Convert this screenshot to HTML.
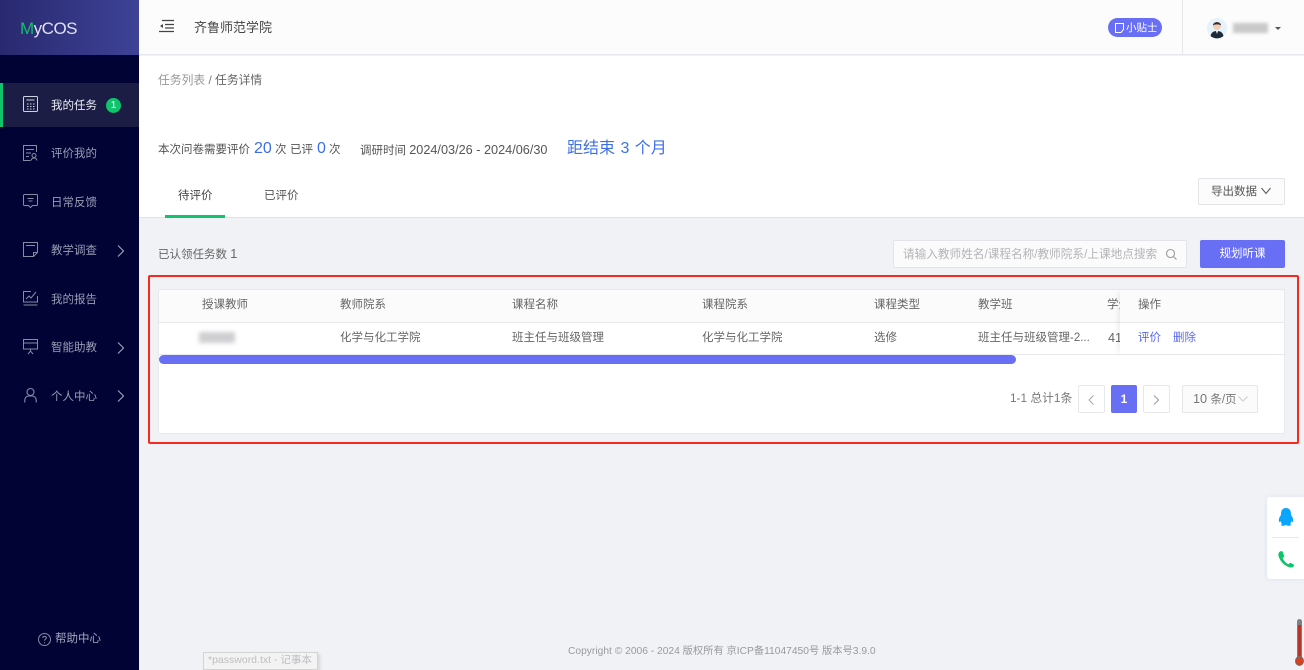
<!DOCTYPE html>
<html lang="zh-CN"><head><meta charset="utf-8"><title>MyCOS</title>
<style>
*{box-sizing:border-box}
html,body{margin:0;padding:0;width:1304px;height:670px;overflow:hidden;background:#f0f2f6;font-family:"Liberation Sans","Noto Sans CJK SC",sans-serif;color:#555;}
.a{position:absolute;white-space:nowrap}
.t12{font-size:11.5px;line-height:16px}
.nav{position:absolute;left:51px;font-size:11.5px;line-height:16px;color:#9a9db5;white-space:nowrap}
.n{font-size:12.7px}
svg{position:absolute;overflow:visible}
</style></head><body>
<div class="a" style="left:0;top:0;width:139px;height:670px;background:#000333"></div>
<div class="a" style="left:0;top:0;width:139px;height:55px;background:linear-gradient(90deg,#28296f,#3e4296)"></div>
<div class="a" style="left:20px;top:17px;font-size:17px;line-height:24px;letter-spacing:-.5px;color:#dfe1f2"><span style="color:#12c06a">M</span>yCOS</div>
<div class="a" style="left:0;top:83px;width:139px;height:44px;background:#1b1d45"></div>
<div class="a" style="left:0;top:83px;width:3px;height:44px;background:#0fc46b"></div>

<svg style="left:23px;top:96px" width="15" height="16" fill="none" stroke="#cfd1df" stroke-width="1"><rect x=".5" y=".5" width="14" height="15" rx="1"/><path d="M3.500 4h8M4 8h1.500M7 8h1.500M10 8h1.500M4 10.500h1.500M7 10.500h1.500M10 10.500h1.500M4 13h1.500M7 13h1.500M10 13h1.500"/></svg>
<div class="nav" style="top:98px;color:#eceef5">我的任务</div>
<div class="a" style="left:106px;top:98px;width:15px;height:15px;border-radius:50%;background:#0fc46b;color:#fff;font-size:10px;line-height:15px;text-align:center">1</div>

<svg style="left:23px;top:145px" width="15" height="16" fill="none" stroke="#888ba3"><path d="M13.500 7V.5H.5v15h7M3 4.500h8M3 8h5M3 11.500h3"/><circle cx="11" cy="10.500" r="2"/><path d="M8 15.500c.5-2 1.500-2.500 3-2.500s2.500.5 3 2.500"/></svg>
<div class="nav" style="top:146px">评价我的</div>

<svg style="left:23px;top:194px" width="15" height="15" fill="none" stroke="#888ba3"><path d="M1.500.5h12a1 1 0 0 1 1 1v9a1 1 0 0 1-1 1H9.500l-2 2-2-2h-4a1 1 0 0 1-1-1v-9a1 1 0 0 1 1-1zM4.500 4.500h6M5.500 7h4"/></svg>
<div class="nav" style="top:195px">日常反馈</div>

<svg style="left:23px;top:242px" width="15" height="15" fill="none" stroke="#888ba3"><path d="M.5.500h14v10l-4 4H.5zM3 3.500h9M14.500 10.500h-4v4"/></svg>
<div class="nav" style="top:243px">教学调查</div>
<svg style="left:117px;top:245px" width="8" height="12" fill="none" stroke="#9a9db5" stroke-width="1.200"><path d="M1 .5 6.500 6 1 11.500"/></svg>

<svg style="left:23px;top:291px" width="15" height="15" fill="none" stroke="#888ba3"><path d="M8 .5H.5v10.500h14V5M.5 14h14M3 8l3-3 2 2 5-6"/></svg>
<div class="nav" style="top:292px">我的报告</div>

<svg style="left:23px;top:339px" width="15" height="15" fill="none" stroke="#888ba3"><path d="M.5.500h14v9.500H.5zM.5 4h14M7.500 10v2M5 15l2.500-3 2.500 3"/></svg>
<div class="nav" style="top:340px">智能助教</div>
<svg style="left:117px;top:342px" width="8" height="12" fill="none" stroke="#9a9db5" stroke-width="1.200"><path d="M1 .5 6.500 6 1 11.500"/></svg>

<svg style="left:24px;top:388px" width="13" height="15" fill="none" stroke="#888ba3" stroke-width="1.100"><circle cx="6.500" cy="4" r="3.500"/><path d="M.8 14.500V12a4 4 0 0 1 4-4h3.400a4 4 0 0 1 4 4v2.500"/></svg>
<div class="nav" style="top:389px">个人中心</div>
<svg style="left:117px;top:390px" width="8" height="12" fill="none" stroke="#9a9db5" stroke-width="1.200"><path d="M1 .5 6.500 6 1 11.500"/></svg>

<svg style="left:38px;top:633px" width="13" height="13" fill="none" stroke="#888ba3"><circle cx="6.500" cy="6.500" r="6"/><path d="M4.800 5c0-2.200 3.500-2.200 3.500 0 0 1.300-1.800 1.300-1.800 2.800M6.500 9.300v1"/></svg>
<div class="nav" style="left:55px;top:631px;color:#a5a8bc">帮助中心</div>

<!-- header -->
<div class="a" style="left:139px;top:0;width:1165px;height:55px;background:#fcfcfd;border-bottom:1px solid #e6e7ec"></div>
<svg style="left:159px;top:19px" width="15" height="14" fill="none" stroke="#444"><path d="M3 1.500h12M6 5.500h9M6 9h9M0 12.500h15" stroke-width="1.300"/><path d="M4 5v4L1 7z" fill="#444" stroke="none"/></svg>
<div class="a" style="left:194px;top:19px;font-size:13px;line-height:18px;color:#444">齐鲁师范学院</div>
<div class="a" style="left:1108px;top:18px;width:54px;height:19px;border-radius:10px;background:#696ff4"></div>
<svg style="left:1115px;top:23px" width="9" height="10" fill="none" stroke="#fff"><path d="M.5.500h8v6l-2.500 3H.5z"/></svg>
<div class="a" style="left:1126px;top:21px;font-size:10.500px;line-height:14px;color:#fff">小贴士</div>
<div class="a" style="left:1182px;top:0;width:1px;height:55px;background:#e6e7ec"></div>
<svg style="left:1207px;top:18px" width="20" height="20"><circle cx="10" cy="10" r="10" fill="#e5f2fc"/><circle cx="10" cy="8" r="4" fill="#f2cdb8"/><path d="M6 7.500C6 3 14 3 14 7.500 12 6 8 6 6 7.500z" fill="#3a2d2a"/><path d="M3.500 18c1-4 3.500-5 6.500-5s5.500 1 6.500 5a10 10 0 0 1-13 0z" fill="#1d2a3a"/><path d="M9 13h2l-1 3z" fill="#fff"/></svg>
<div class="a" style="left:1233px;top:23px;width:35px;height:10px;background:#c9c9c9;filter:blur(1.500px)"></div>
<div class="a" style="left:1275px;top:27px;width:0;height:0;border-left:3px solid transparent;border-right:3px solid transparent;border-top:3px solid #555"></div>

<!-- white section -->
<div class="a" style="left:139px;top:56px;width:1165px;height:162px;background:#fff;border-bottom:1px solid #e2e3e8"></div>
<div class="a t12" style="left:158px;top:72px;font-size:11.8px;color:#999">任务列表 <span style="color:#777">/</span> <span style="color:#666">任务详情</span></div>

<div class="a t12" style="left:158px;top:142px;color:#555">本次问卷需要评价</div>
<div class="a" style="left:254px;top:139px;font-size:16px;line-height:20px;color:#3d6fe8">20</div>
<div class="a t12" style="left:275px;top:142px;color:#555">次</div>
<div class="a t12" style="left:290px;top:142px;color:#555">已评</div>
<div class="a" style="left:317px;top:139px;font-size:16px;line-height:20px;color:#3d6fe8">0</div>
<div class="a t12" style="left:329px;top:142px;color:#555">次</div>
<div class="a t12" style="left:360px;top:142px;color:#555">调研时间 <span class="n">2024/03/26 - 2024/06/30</span></div>
<div class="a" style="left:567px;top:138px;font-size:16px;line-height:20px;color:#3d6fe8;word-spacing:1px;padding-top:1px">距结束 3 个月</div>

<div class="a t12" style="left:178px;top:188px;color:#444">待评价</div>
<div class="a t12" style="left:264px;top:188px;color:#555">已评价</div>
<div class="a" style="left:165px;top:215px;width:60px;height:3px;background:#0fc46b"></div>

<div class="a" style="left:1198px;top:178px;width:87px;height:27px;border:1px solid #e3e4e9;border-radius:2px;background:#fcfcfd"></div>
<div class="a t12" style="left:1211px;top:184px;color:#555">导出数据</div>
<svg style="left:1261px;top:187px" width="10" height="8" fill="none" stroke="#555"><path d="M.5 1 5 6.500 9.500 1"/></svg>

<!-- toolbar -->
<div class="a t12" style="left:158px;top:246px;color:#666">已认领任务数 <span class="n">1</span></div>
<div class="a" style="left:893px;top:240px;width:294px;height:28px;border:1px solid #e3e4e9;border-radius:2px;background:#fbfbfc"></div>
<div class="a t12" style="left:903px;top:247px;font-size:11.65px;color:#b4b4b8">请输入教师姓名/课程名称/教师院系/上课地点搜索</div>
<svg style="left:1166px;top:249px" width="11" height="11" fill="none" stroke="#999" stroke-width="1.100"><circle cx="4.500" cy="4.500" r="4"/><path d="m7.500 7.500 3 3"/></svg>
<div class="a" style="left:1200px;top:240px;width:85px;height:28px;border-radius:2px;background:#696ff4;color:#fff;font-size:11.5px;line-height:28px;text-align:center">规划听课</div>

<!-- red box -->
<div class="a" style="left:148px;top:275px;width:1151px;height:169px;border:2px solid #f72a20;border-radius:2px"></div>
<!-- card -->
<div class="a" style="left:158px;top:289px;width:1127px;height:145px;background:#fff;border:1px solid #e8e9ed"></div>
<div class="a" style="left:159px;top:290px;width:1125px;height:33px;background:#fbfbfc;border-bottom:1px solid #e8e9ed"></div>
<div class="a" style="left:159px;top:354px;width:1125px;height:1px;background:#e8e9ed"></div>

<div class="a t12" style="left:202px;top:297px;color:#666">授课教师</div>
<div class="a t12" style="left:340px;top:297px;color:#666">教师院系</div>
<div class="a t12" style="left:512px;top:297px;color:#666">课程名称</div>
<div class="a t12" style="left:702px;top:297px;color:#666">课程院系</div>
<div class="a t12" style="left:874px;top:297px;color:#666">课程类型</div>
<div class="a t12" style="left:978px;top:297px;color:#666">教学班</div>
<div class="a" style="left:1107px;top:297px;width:13px;overflow:hidden;font-size:11.5px;line-height:16px;color:#666">学分</div>

<div class="a" style="left:199px;top:332px;width:36px;height:11px;background:#cfcfd1;filter:blur(2px)"></div>
<div class="a t12" style="left:340px;top:330px;color:#666">化学与化工学院</div>
<div class="a t12" style="left:512px;top:330px;color:#666">班主任与班级管理</div>
<div class="a t12" style="left:702px;top:330px;color:#666">化学与化工学院</div>
<div class="a t12" style="left:874px;top:330px;color:#666">选修</div>
<div class="a t12" style="left:978px;top:330px;color:#666">班主任与班级管理-2...</div>
<div class="a t12" style="left:1108px;top:330px;color:#666"><span class="n">41</span></div>

<div class="a" style="left:1120px;top:290px;width:164px;height:64px;background:#fff;box-shadow:-4px 0 5px -2px rgba(0,0,0,.07)"></div>
<div class="a" style="left:1120px;top:290px;width:164px;height:33px;background:#fbfbfc;border-bottom:1px solid #e8e9ed"></div>
<div class="a t12" style="left:1138px;top:297px;color:#666">操作</div>
<div class="a t12" style="left:1138px;top:330px;color:#5a68ee">评价</div>
<div class="a t12" style="left:1173px;top:330px;color:#5a68ee">删除</div>

<div class="a" style="left:159px;top:355px;width:857px;height:9px;border-radius:5px;background:#696ff4"></div>

<!-- pagination -->
<div class="a t12" style="left:1010px;top:390px;font-size:11.8px;color:#777">1-1 总计1条</div>
<div class="a" style="left:1078px;top:385px;width:27px;height:28px;border:1px solid #e6e7ea;border-radius:2px"></div>
<svg style="left:1088px;top:395px" width="7" height="10" fill="none" stroke="#aaa"><path d="M5.500.5 1 5l4.500 4.500"/></svg>
<div class="a" style="left:1111px;top:385px;width:26px;height:28px;border-radius:2px;background:#696ff4;color:#fff;font-size:12px;line-height:28px;text-align:center;font-weight:bold">1</div>
<div class="a" style="left:1143px;top:385px;width:27px;height:28px;border:1px solid #e6e7ea;border-radius:2px"></div>
<svg style="left:1153px;top:395px" width="7" height="10" fill="none" stroke="#999"><path d="M1 .5 5.500 5 1 9.500"/></svg>
<div class="a" style="left:1182px;top:385px;width:76px;height:28px;border:1px solid #e6e7ea;border-radius:2px;background:#fbfbfc"></div>
<div class="a t12" style="left:1193px;top:391px;color:#777"><span class="n">10</span> 条/页</div>
<svg style="left:1238px;top:396px" width="10" height="6" fill="none" stroke="#ccc"><path d="M.5.500 5 5 9.500.5"/></svg>

<!-- right float -->
<div class="a" style="left:1267px;top:497px;width:37px;height:82px;background:#fff;border-radius:3px 0 0 3px;box-shadow:0 0 5px rgba(90,110,200,.12)"></div>
<div class="a" style="left:1272px;top:537px;width:27px;height:1px;background:#e8e9ed"></div>
<svg style="left:1278px;top:508px" width="16" height="19"><path d="M8 0c3.500 0 5 2.700 5 6 0 1 .3 1.500 1 2.500 1 1.500 1.500 3.500 1 5-.3.800-1 .500-1.500-.500-.3 1.500-1 2.500-1.500 3 1 .3 1.300 1 .5 1.500-1 .4-3 .4-3.500-.3H7c-.5.700-2.500.7-3.500.3-.8-.5-.5-1.200.5-1.500-.5-.5-1.200-1.500-1.500-3-.5 1-1.200 1.300-1.500.5-.5-1.500 0-3.500 1-5 .7-1 1-1.500 1-2.500C3 2.700 4.500 0 8 0z" fill="#0aa5ff"/></svg>
<svg style="left:1277px;top:550px" width="18" height="19" fill="none"><path d="M3 1.500c-1.500 1-2 2.500-1.500 4.500C3 11.500 8 16.500 13.500 17.500c1.500.2 2.800-.5 3.500-1.800.3-.5 0-1-.5-1.300l-2.500-1.300c-.5-.3-1-.2-1.400.2l-.9 1c-2.700-1-5-3.600-6-6.300l1-.8c.5-.4.600-.9.400-1.400L5.800 2c-.3-.8-1.800-1.200-2.800-.5z" fill="#0fc46b"/></svg>

<!-- thermometer -->
<div class="a" style="left:1297px;top:619px;width:5px;height:40px;background:#7c7f86;border-radius:3px 3px 0 0"></div>
<div class="a" style="left:1298px;top:625px;width:3px;height:36px;background:#b8352a"></div>
<div class="a" style="left:1295px;top:656px;width:9px;height:10px;border-radius:50%;background:#d8401f;border:1.500px solid #6e7076"></div>

<!-- footer -->
<div class="a" style="left:568px;top:644px;font-size:10.25px;line-height:15px;color:#9a9a9e">Copyright © 2006 - 2024 版权所有 京ICP备11047450号 版本号3.9.0</div>
<div class="a" style="left:203px;top:652px;width:115px;height:18px;background:#f3f3f4;border:1px solid #d4d4d6;box-shadow:2px 2px 3px rgba(0,0,0,.12);font-size:10.500px;line-height:15px;color:#bdbdbf;padding-left:4px">*password.txt - 记事本</div>
</body></html>
